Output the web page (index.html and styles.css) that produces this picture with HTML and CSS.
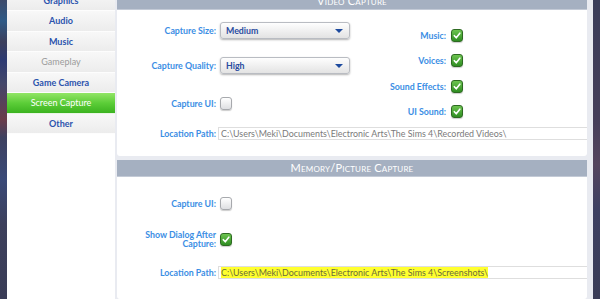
FILE: index.html
```html
<!DOCTYPE html>
<html>
<head>
<meta charset="utf-8">
<link rel="stylesheet" href="styles.css">
</head>
<body>
<div class="screen">
  <div class="edge edge-left"></div>
  <nav class="sidebar">
    <div class="menu">
      <div class="item">Graphics</div>
      <div class="item">Audio</div>
      <div class="item">Music</div>
      <div class="item disabled">Gameplay</div>
      <div class="item">Game Camera</div>
      <div class="item active">Screen Capture</div>
      <div class="item">Other</div>
    </div>
  </nav>
  <main class="content">
    <section class="panel video">
      <header class="panel-head">Video Capture</header>
      <div class="panel-body video-body">
        <div class="cols">
          <div class="col-left">
            <div class="row row-size"><span class="label">Capture Size:</span><div class="select">Medium<span class="caret"></span></div></div>
            <div class="row row-quality"><span class="label">Capture Quality:</span><div class="select">High<span class="caret"></span></div></div>
            <div class="row row-ui"><span class="label">Capture UI:</span><span class="box"></span></div>
          </div>
          <div class="col-right">
            <div class="rrow"><span class="label rlabel">Music:</span><span class="box on"><svg viewBox="0 0 12 12"><path d="M2.8 6.2 L5.1 8.8 L9.4 3.2"/></svg></span></div>
            <div class="rrow"><span class="label rlabel">Voices:</span><span class="box on"><svg viewBox="0 0 12 12"><path d="M2.8 6.2 L5.1 8.8 L9.4 3.2"/></svg></span></div>
            <div class="rrow"><span class="label rlabel">Sound Effects:</span><span class="box on"><svg viewBox="0 0 12 12"><path d="M2.8 6.2 L5.1 8.8 L9.4 3.2"/></svg></span></div>
            <div class="rrow"><span class="label rlabel">UI Sound:</span><span class="box on"><svg viewBox="0 0 12 12"><path d="M2.8 6.2 L5.1 8.8 L9.4 3.2"/></svg></span></div>
          </div>
        </div>
        <div class="path-row"><span class="label">Location Path:</span><div class="path">C:\Users\Meki\Documents\Electronic Arts\The Sims 4\Recorded Videos\</div></div>
      </div>
    </section>
    <section class="panel memory">
      <header class="panel-head">Memory/Picture Capture</header>
      <div class="panel-body memory-body">
        <div class="row row-mui"><span class="label">Capture UI:</span><span class="box"></span></div>
        <div class="row row-dialog"><span class="label two">Show Dialog After<br>Capture:</span><span class="box on"><svg viewBox="0 0 12 12"><path d="M2.8 6.2 L5.1 8.8 L9.4 3.2"/></svg></span></div>
        <div class="path-row mpath"><span class="label">Location Path:</span><div class="path"><span class="hl">C:\Users\Meki\Documents\Electronic Arts\The Sims 4\Screenshots\</span></div></div>
      </div>
    </section>
  </main>
  <div class="edge edge-right"></div>
</div>
</body>
</html>
```

FILE: styles.css
```css
* { box-sizing: border-box; }
html, body { margin: 0; padding: 0; }
body {
  width: 600px;
  height: 299px;
  overflow: hidden;
  background: #3a3d57;
  font-family: Lato, "Open Sans", sans-serif;
}
.screen {
  display: flex;
  height: 299px;
  overflow: hidden;
}
.edge { width: 7px; flex: none; }
.edge-left {
  background: linear-gradient(180deg, #3d4a6a 0%, #2f5a86 7%, #3c3f5c 14%, #2d3a72 20%, #44476a 28%, #6a3c4a 40%, #3e4160 46%, #3a4a78 60%, #3d405c 75%, #3a3d57 100%);
}
.edge-right {
  background: linear-gradient(180deg, #3b3e5a 0%, #463f5a 40%, #55455e 55%, #3d4062 70%, #3a3d57 100%);
}
.sidebar {
  width: 108px;
  flex: none;
  background: #fff;
}
.menu { margin-top: -9.5px; }
.item {
  height: 20.5px;
  line-height: 19.5px;
  border-bottom: 1px solid #fdfdfd;
  background: linear-gradient(180deg, #f8f8f8, #ececec);
  color: #2b53ad;
  font-weight: 700;
  font-size: 9px;
  text-align: center;
}
.item.disabled { color: #9b9b9b; font-weight: 400; }
.item.active {
  background: linear-gradient(180deg, #92e566, #5ccd38 50%, #3bb320);
  color: #fff;
  font-weight: 400;
  border-bottom-color: #e9f5e4;
}
.content {
  flex: 1;
  background: #e9ebf1;
  padding: 0 6px 0 2px;
  margin-top: -7px;
  display: flex;
  flex-direction: column;
  gap: 4px;
}
.panel {
  background: #fff;
  border-radius: 0 0 3px 3px;
}
.panel-head {
  height: 17px;
  line-height: 16px;
  background: #a5b0c1;
  border-bottom: 1px solid #c3cad6;
  color: #fff;
  text-align: center;
  font-variant: small-caps;
  font-size: 11px;
  letter-spacing: 0.2px;
}
.video-body { height: 146px; padding-top: 12px; }
.cols { display: flex; height: 98px; }
.col-left { width: 233px; display: flex; flex-direction: column; }
.row { display: flex; align-items: center; }
.label {
  width: 99px;
  flex: none;
  text-align: right;
  color: #3b8ee4;
  font-weight: 700;
  font-size: 8.8px;
}
.row .label { margin-right: 4px; }
.row-size, .row-quality { height: 17px; }
.row-quality { margin-top: 18px; }
.row-ui { margin-top: 21px; height: 17px; }
.select {
  width: 130px;
  height: 17px;
  border: 1px solid #b9bcc2;
  border-radius: 3px;
  background: linear-gradient(180deg, #fefefe, #e3e3e3);
  box-shadow: 0 1px 2px rgba(0,0,0,0.3);
  padding-left: 5px;
  line-height: 15px;
  font-size: 8.8px;
  font-weight: 700;
  color: #2a4ba0;
  display: flex;
  align-items: center;
  justify-content: space-between;
  padding-right: 6px;
}
.caret {
  width: 0; height: 0;
  border-left: 4px solid transparent;
  border-right: 4px solid transparent;
  border-top: 4px solid #1d4a9e;
}
.box {
  width: 12px;
  height: 13px;
  flex: none;
  border-radius: 3px;
  border: 1px solid #a7a9ad;
  background: linear-gradient(180deg, #ffffff, #dedfe2);
  box-shadow: 0 1px 1px rgba(0,0,0,0.2);
  display: flex;
  align-items: center;
  justify-content: center;
}
.box.on {
  border-color: #2e6a22;
  background: linear-gradient(180deg, #6cc44f, #2f8d22);
}
.box svg { width: 11px; height: 11px; }
.box svg path { fill: none; stroke: #fff; stroke-width: 1.9; stroke-linecap: round; stroke-linejoin: round; }
.col-right { padding-top: 6px; display: flex; flex-direction: column; gap: 11.5px; }
.rrow { display: flex; align-items: center; height: 14px; }
.rlabel { width: 96px; margin-right: 5px; }
.path-row { display: flex; align-items: center; margin-top: 7px; }
.path-row .label { margin-right: 2px; }
.path {
  flex: 1;
  height: 13px;
  border: 1px solid #dedede;
  border-right: none;
  padding-left: 2px;
  line-height: 11px;
  font-size: 8.9px;
  color: #7a7a7a;
  white-space: nowrap;
  overflow: hidden;
}
.memory { flex: 1; }
.memory-body { padding-top: 19px; }
.row-mui { height: 14px; }
.row-dialog { margin-top: 20px; height: 18px; }
.label.two { line-height: 9px; }
.mpath { margin-top: 18px; }
.hl { background: #ffff2e; color: #6b6b3a; }
```
